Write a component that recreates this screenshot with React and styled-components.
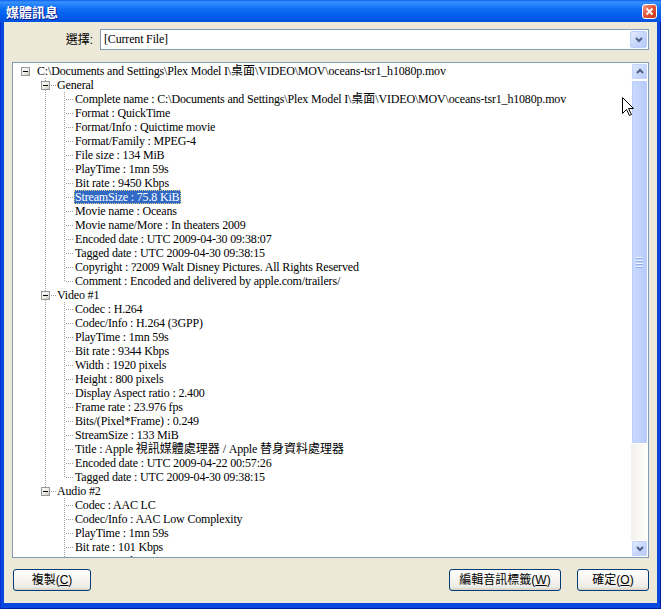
import React from "react";
import styled, { createGlobalStyle, css } from "styled-components";

const uiFont = `"Liberation Sans", "Noto Sans CJK TC", sans-serif`;
const treeFont = `"Liberation Serif", "Noto Sans CJK TC", serif`;
const dots = "#A0A0A0";

const GlobalStyle = createGlobalStyle`
  html, body { margin: 0; padding: 0; }
  body { background: #ffffff; font-family: ${treeFont}; }
`;

const rootPath = "C:\\Documents and Settings\\Plex Model I\\桌面\\VIDEO\\MOV\\oceans-tsr1_h1080p.mov";

// more: the list goes on below the visible part of the tree
const groups = [
  {
    name: "General",
    items: [
      "Complete name : " + rootPath,
      "Format : QuickTime",
      "Format/Info : Quictime movie",
      "Format/Family : MPEG-4",
      "File size : 134 MiB",
      "PlayTime : 1mn 59s",
      "Bit rate : 9450 Kbps",
      "StreamSize : 75.8 KiB",
      "Movie name : Oceans",
      "Movie name/More : In theaters 2009",
      "Encoded date : UTC 2009-04-30 09:38:07",
      "Tagged date : UTC 2009-04-30 09:38:15",
      "Copyright : ?2009 Walt Disney Pictures. All Rights Reserved",
      "Comment : Encoded and delivered by apple.com/trailers/",
    ],
  },
  {
    name: "Video #1",
    items: [
      "Codec : H.264",
      "Codec/Info : H.264 (3GPP)",
      "PlayTime : 1mn 59s",
      "Bit rate : 9344 Kbps",
      "Width : 1920 pixels",
      "Height : 800 pixels",
      "Display Aspect ratio : 2.400",
      "Frame rate : 23.976 fps",
      "Bits/(Pixel*Frame) : 0.249",
      "StreamSize : 133 MiB",
      "Title : Apple 視訊媒體處理器 / Apple 替身資料處理器",
      "Encoded date : UTC 2009-04-22 00:57:26",
      "Tagged date : UTC 2009-04-30 09:38:15",
    ],
  },
  {
    name: "Audio #2",
    more: true,
    items: [
      "Codec : AAC LC",
      "Codec/Info : AAC Low Complexity",
      "PlayTime : 1mn 59s",
      "Bit rate : 101 Kbps",
      "Bit rate mode : CBR",
    ],
  },
];

const selectedItem = "General:7";

// CJK runs get their own span so the fallback font does not stretch the 14px rows
const cjkRun = /([\u3000-\u9fff\uff00-\uffef]+)/;
function Mixed({ text }) {
  return text.split(cjkRun).map((part, i) => (i % 2 ? <Cjk key={i}>{part}</Cjk> : part));
}

/* ---------- window frame ---------- */

const Window = styled.div`
  position: relative;
  width: 661px;
  height: 609px;
  display: flex;
  flex-direction: column;
  background: #0b48de;
  box-shadow: inset 1px 0 0 #0831d9, inset -1px 0 0 #001ea0, inset 0 -1px 0 #001ea0;
  overflow: hidden;
`;

const TitleBar = styled.div`
  flex: none;
  height: 22px;
  display: flex;
  align-items: center;
  justify-content: space-between;
  padding: 0 4px 0 6px;
  background: linear-gradient(
    to bottom,
    #0a5ef0 0%,
    #3a92fd 9%,
    #2482fb 22%,
    #0d6cf4 42%,
    #0562ef 62%,
    #0059e7 82%,
    #0052dd 100%
  );
`;

const Title = styled.span`
  color: #ffffff;
  font: bold 13px "Noto Sans CJK TC", sans-serif;
  line-height: 1;
  text-shadow: 1px 1px 0 #0a1d8a;
`;

const CloseButton = styled.span`
  width: 15px;
  height: 15px;
  box-sizing: border-box;
  border: 1px solid #ffffff;
  border-radius: 3px;
  background: linear-gradient(135deg, #f0a48c 0%, #e2573a 45%, #c7391c 100%);
  display: flex;
  align-items: center;
  justify-content: center;
`;

const Body = styled.div`
  flex: 1;
  margin: 0 4px 6px;
  padding: 7px 8px 12px;
  background: #ece9d8;
  display: flex;
  flex-direction: column;
  min-height: 0;
`;

/* ---------- select row ---------- */

const SelectRow = styled.div`
  flex: none;
  display: flex;
  align-items: center;
  height: 21px;
  margin-bottom: 12px;
`;

const FieldLabel = styled.span`
  width: 81px;
  margin-right: 7px;
  text-align: right;
  font: 12px ${uiFont};
  line-height: 1;
  color: #000;
`;

const Combo = styled.div`
  flex: 1;
  height: 21px;
  box-sizing: border-box;
  border: 1px solid #7f9db9;
  background: #ffffff;
  display: flex;
  align-items: center;
  padding: 0 1px 0 3px;
`;

const ComboText = styled.span`
  flex: 1;
  font: 12px ${treeFont};
  letter-spacing: -0.17px;
  color: #000;
`;

const ArrowButton = styled.span`
  flex: none;
  width: 17px;
  height: 17px;
  box-sizing: border-box;
  border: 1px solid #bdd0fa;
  border-radius: 2px;
  background: linear-gradient(135deg, #e4ecfd 0%, #c8d7fc 50%, #b4c8f8 100%);
  display: flex;
  align-items: center;
  justify-content: center;
`;

/* ---------- tree ---------- */

const TreeBox = styled.div`
  flex: 1;
  min-height: 0;
  margin-bottom: 11px;
  border: 1px solid #7f9db9;
  background: #ffffff;
  display: flex;
`;

const TreeContent = styled.div`
  flex: 1;
  min-width: 0;
  overflow: hidden;
  padding-top: 1px;
`;

const Row = styled.div`
  display: flex;
  align-items: center;
  height: 14px;
  white-space: nowrap;

  svg {
    display: block;
    flex: none;
  }
`;

const Indent = styled.span`
  flex: none;
  width: ${(p) => p.$w}px;
`;

const NodeText = styled.span`
  flex: none;
  height: 14px;
  line-height: 14px;
  padding: 0 2px 0 1px;
  box-sizing: border-box;
  font: 12px ${treeFont};
  letter-spacing: -0.17px;
  color: #000;

  ${(p) =>
    p.$selected &&
    css`
      background: #316ac5;
      color: #ffffff;
      outline: 1px dotted #e7cf86;
      outline-offset: -1px;
    `}
`;

const Cjk = styled.span`
  font-family: "Noto Sans CJK TC", sans-serif;
  font-size: 12px;
  letter-spacing: 0;
  line-height: 0;
`;

/* ---------- scrollbar ---------- */

const ScrollBar = styled.div`
  flex: none;
  width: 17px;
  display: flex;
  flex-direction: column;
  background: linear-gradient(to right, #f3f1ec, #fefefb);
`;

const ScrollButton = styled.span`
  flex: none;
  height: 17px;
  box-sizing: border-box;
  border: 1px solid #ffffff;
  border-radius: 2px;
  background: linear-gradient(135deg, #e2eafe 0%, #c8d7fc 55%, #b6caf8 100%);
  box-shadow: inset 0 0 0 1px #c3d3fc;
  display: flex;
  align-items: center;
  justify-content: center;
`;

const Track = styled.div`
  flex: 1;
  display: flex;
  flex-direction: column;
`;

const Thumb = styled.span`
  flex: none;
  height: ${(p) => p.$h}px;
  box-sizing: border-box;
  border: 1px solid #ffffff;
  border-radius: 2px;
  background: linear-gradient(to right, #cbdafd 0%, #c1d3fc 50%, #b5c9f9 100%);
  box-shadow: inset 0 0 0 1px #b9cdf9;
  display: flex;
  flex-direction: column;
  align-items: center;
  justify-content: center;
  gap: 1px;
`;

const Grip = styled.span`
  width: 7px;
  height: 1px;
  background: #eef3fe;
  border-bottom: 1px solid #8cb0f8;
`;

/* ---------- buttons ---------- */

const ButtonBar = styled.div`
  flex: none;
  display: flex;
  align-items: center;
  gap: 16px;
  padding-left: 1px;
`;

const Spacer = styled.span`
  flex: 1;
`;

const XPButton = styled.span`
  width: ${(p) => p.$w}px;
  height: 22px;
  box-sizing: border-box;
  border: 1px solid #003c74;
  border-radius: 3px;
  background: linear-gradient(to bottom, #ffffff 0%, #f7f6f2 40%, #ecebe5 85%, #d6d0c5 100%);
  display: flex;
  align-items: center;
  justify-content: center;
  font: 12px ${uiFont};
  line-height: 1;
  color: #000;

  u {
    text-decoration: underline;
    text-underline-offset: 1px;
  }
`;

const Cursor = styled.svg`
  position: absolute;
  left: 622px;
  top: 97px;
`;

/* ---------- drawings ---------- */

function Expander({ up, down, stub, width = 15 }) {
  return (
    <svg width={width} height="14" viewBox={`0 0 ${width} 14`} shapeRendering="crispEdges">
      <defs>
        <linearGradient id="xpbox" x1="0" y1="0" x2="1" y2="1">
          <stop offset="0" stopColor="#ffffff" />
          <stop offset="0.5" stopColor="#f0efea" />
          <stop offset="1" stopColor="#c6c2b2" />
        </linearGradient>
      </defs>
      {up && <line x1="4.5" y1="0" x2="4.5" y2="3" stroke={dots} strokeDasharray="1 1" />}
      {down && <line x1="4.5" y1="12" x2="4.5" y2="14" stroke={dots} strokeDasharray="1 1" />}
      {stub && <line x1="10" y1="7.5" x2={width} y2="7.5" stroke={dots} strokeDasharray="1 1" />}
      <rect x="0.5" y="3.5" width="8" height="8" fill="url(#xpbox)" stroke="#919b9c" />
      <rect x="2" y="7" width="5" height="1" fill="#000000" />
    </svg>
  );
}

function Guide({ show }) {
  return (
    <svg width="20" height="14" viewBox="0 0 20 14" shapeRendering="crispEdges">
      {show && <line x1="4.5" y1="0" x2="4.5" y2="14" stroke={dots} strokeDasharray="1 1" />}
    </svg>
  );
}

function LeafLine({ last }) {
  return (
    <svg width="13" height="14" viewBox="0 0 13 14" shapeRendering="crispEdges">
      <line x1="3.5" y1="0" x2="3.5" y2={last ? 8 : 14} stroke={dots} strokeDasharray="1 1" />
      <line x1="5" y1="7.5" x2="13" y2="7.5" stroke={dots} strokeDasharray="1 1" />
    </svg>
  );
}

function Chevron({ dir }) {
  const pts = dir === "up" ? "1,5 4,2 7,5" : "1,2 4,5 7,2";
  return (
    <svg width="8" height="7" viewBox="0 0 8 7">
      <polyline points={pts} fill="none" stroke="#4d6185" strokeWidth="2" />
    </svg>
  );
}

export default function App() {
  return (
    <>
      <GlobalStyle />
      <Window>
        <TitleBar>
          <Title>媒體訊息</Title>
          <CloseButton>
            <svg width="9" height="9" viewBox="0 0 9 9">
              <path d="M1.5 1.5 L7.5 7.5 M7.5 1.5 L1.5 7.5" stroke="#ffffff" strokeWidth="1.9" />
            </svg>
          </CloseButton>
        </TitleBar>

        <Body>
          <SelectRow>
            <FieldLabel>選擇:</FieldLabel>
            <Combo>
              <ComboText>[Current File]</ComboText>
              <ArrowButton>
                <Chevron dir="down" />
              </ArrowButton>
            </Combo>
          </SelectRow>

          <TreeBox>
            <TreeContent>
              <Row>
                <Indent $w={8} />
                <Expander />
                <NodeText>
                  <Mixed text={rootPath} />
                </NodeText>
              </Row>
              {groups.map((g, gi) => {
                const lastGroup = gi === groups.length - 1;
                return (
                  <React.Fragment key={g.name}>
                    <Row>
                      <Indent $w={28} />
                      <Expander up down={!lastGroup} stub />
                      <NodeText>{g.name}</NodeText>
                    </Row>
                    {g.items.map((item, i) => (
                      <Row key={i}>
                        <Indent $w={28} />
                        <Guide show={!lastGroup} />
                        <LeafLine last={!g.more && i === g.items.length - 1} />
                        <NodeText $selected={`${g.name}:${i}` === selectedItem}>
                          <Mixed text={item} />
                        </NodeText>
                      </Row>
                    ))}
                  </React.Fragment>
                );
              })}
            </TreeContent>

            <ScrollBar>
              <ScrollButton>
                <Chevron dir="up" />
              </ScrollButton>
              <Track>
                <Thumb $h={364}>
                  <Grip />
                  <Grip />
                  <Grip />
                  <Grip />
                </Thumb>
              </Track>
              <ScrollButton>
                <Chevron dir="down" />
              </ScrollButton>
            </ScrollBar>
          </TreeBox>

          <ButtonBar>
            <XPButton $w={78}>
              複製(<u>C</u>)
            </XPButton>
            <Spacer />
            <XPButton $w={112}>
              編輯音訊標籤(<u>W</u>)
            </XPButton>
            <XPButton $w={72}>
              確定(<u>O</u>)
            </XPButton>
          </ButtonBar>
        </Body>

        <Cursor width="13" height="20" viewBox="0 0 13 20">
          <polygon
            points="0.5,0.5 0.5,16.5 4.5,12.5 7.5,18.5 9.5,17.5 6.5,11.5 11.5,11.5"
            fill="#ffffff"
            stroke="#000000"
            strokeLinejoin="miter"
          />
        </Cursor>
      </Window>
    </>
  );
}
